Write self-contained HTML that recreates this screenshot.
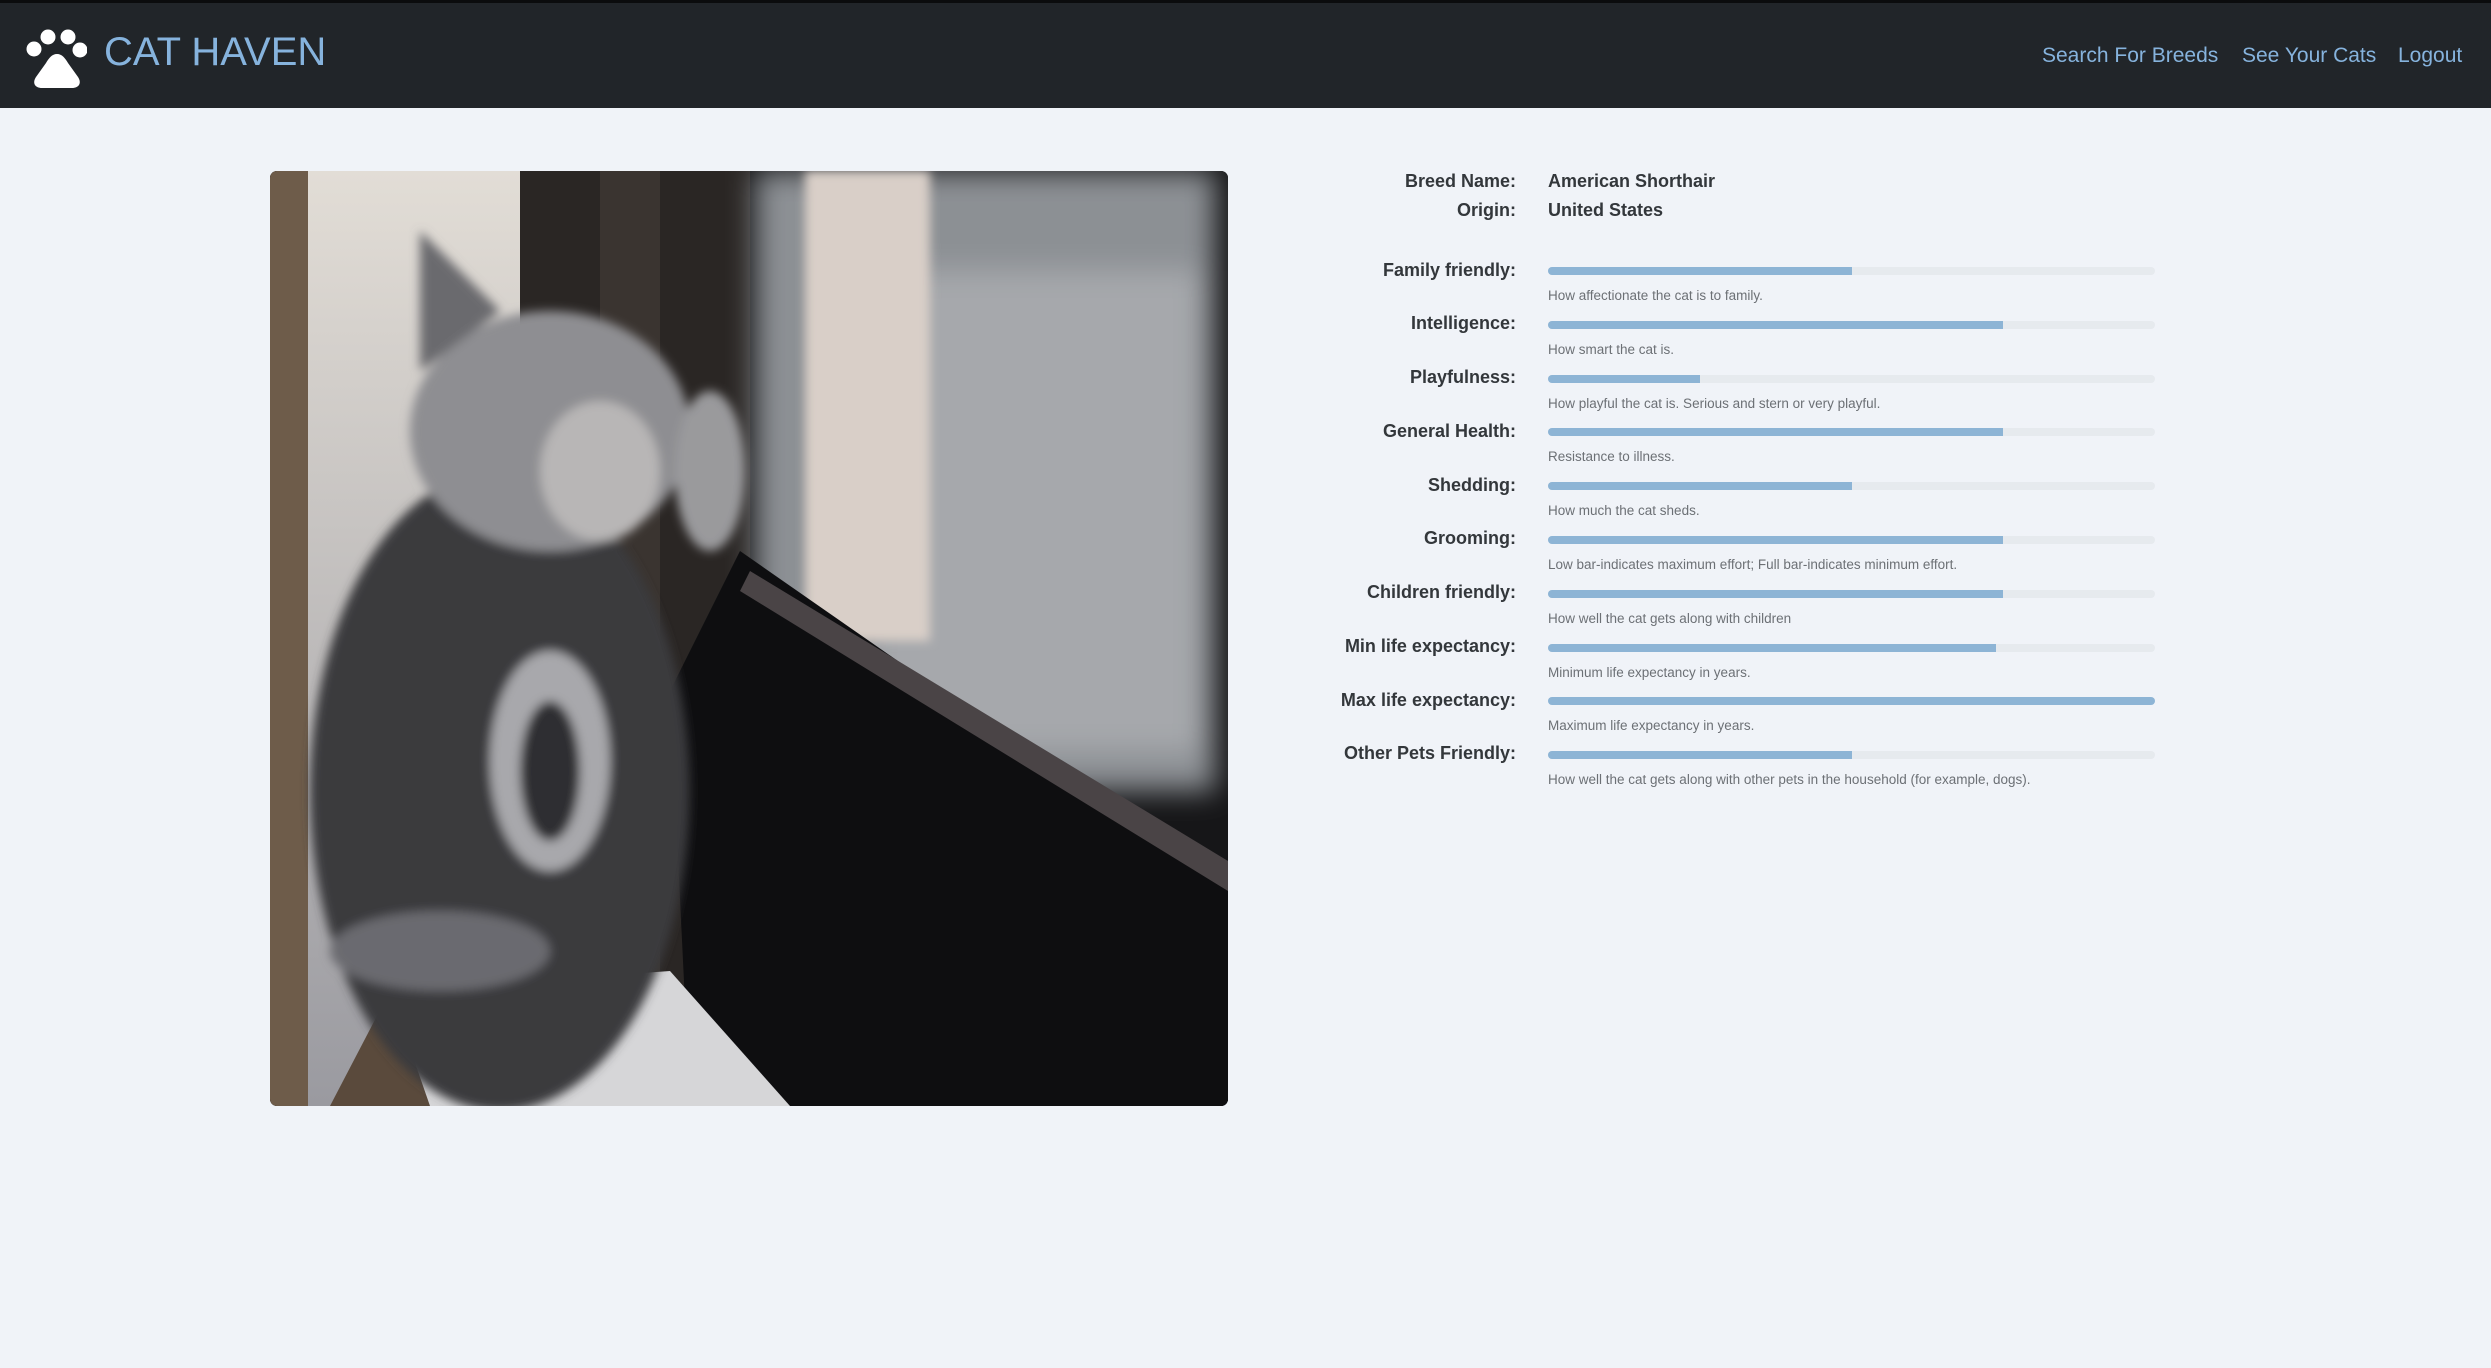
<!DOCTYPE html>
<html><head><meta charset="utf-8"><style>
*{margin:0;padding:0;box-sizing:border-box}
body{width:2491px;height:1368px;background:#f0f3f8;font-family:"Liberation Sans",sans-serif;position:relative;overflow:hidden}
.hdr{position:absolute;left:0;top:0;width:2491px;height:108px;background:#212529;border-top:3px solid #0b0c0d}
.brand{position:absolute;left:104px;top:27px;font-size:40px;color:#86b3dd;letter-spacing:0px}
.nav{position:absolute;top:41px;font-size:21px;color:#86b3dd}
.img{position:absolute;left:270px;top:171px;width:958px;height:935px;border-radius:7px;overflow:hidden;background:#1a1a1c}
.lbl{position:absolute;right:975px;font-size:18px;font-weight:bold;color:#33373b;text-align:right;white-space:nowrap}
.val{position:absolute;left:1548px;font-size:18px;font-weight:bold;color:#33373b}
.bar{position:absolute;left:1548px;width:607px;height:8px;border-radius:4px;background:#e6eaee;overflow:hidden}
.bar i{display:block;height:100%;background:#8db4d5}
.desc{position:absolute;left:1548px;font-size:13.5px;color:#6c7075}
</style></head><body>
<div class="hdr">
<svg style="position:absolute;left:25px;top:24px" width="62" height="62" viewBox="0 0 62 62">
<circle cx="9" cy="22" r="7.5" fill="#fff"/><circle cx="23" cy="10" r="7.5" fill="#fff"/><circle cx="43" cy="10" r="7.5" fill="#fff"/><circle cx="55" cy="23" r="7.5" fill="#fff"/>
<path d="M32 27 C27 27 24 31 21 36 L11 50 C7 56 10 61 17 61 L47 61 C54 61 57 56 53 50 L43 36 C40 31 37 27 32 27 Z" fill="#fff"/>
</svg>
<div class="brand">CAT HAVEN</div>
<div class="nav" style="left:2042px">Search For Breeds</div>
<div class="nav" style="left:2242px">See Your Cats</div>
<div class="nav" style="left:2398px">Logout</div>
</div>
<div class="img">
<svg width="958" height="935" viewBox="0 0 958 935">
<defs><filter id="b"><feGaussianBlur stdDeviation="14"/></filter><filter id="s"><feGaussianBlur stdDeviation="5"/></filter>
<linearGradient id="w" x1="0" y1="0" x2="0" y2="1"><stop offset="0" stop-color="#e2ddd6"/><stop offset="1" stop-color="#9a9aa0"/></linearGradient></defs>
<rect width="958" height="935" fill="#161618"/>
<rect x="0" y="0" width="40" height="935" fill="#6e5c4a"/>
<rect x="38" y="0" width="215" height="935" fill="url(#w)"/>
<rect x="250" y="0" width="230" height="935" fill="#2a2624"/>
<rect x="330" y="0" width="60" height="935" fill="#3a3430"/>
<g filter="url(#b)"><rect x="485" y="0" width="460" height="620" fill="#8c9094"/>
<rect x="600" y="100" width="330" height="480" fill="#a6a8ac"/></g>
<rect x="535" y="0" width="125" height="470" fill="#d9cfc8" filter="url(#s)"/>
<polygon points="470,380 958,720 958,935 420,935 400,520" fill="#0e0e10"/>
<polygon points="480,400 958,690 958,720 470,420" fill="#4a4446"/>
<polygon points="120,820 400,800 520,935 150,935" fill="#d6d6d8"/>
<polygon points="120,820 160,935 60,935" fill="#5a4a3c"/>
<g filter="url(#s)">
<ellipse cx="230" cy="620" rx="190" ry="320" fill="#3a3a3e"/>
<ellipse cx="280" cy="260" rx="140" ry="120" fill="#8e8e92"/>
<polygon points="150,60 230,140 150,200" fill="#6a6a6e"/>
<ellipse cx="330" cy="300" rx="60" ry="70" fill="#b8b6b6"/>
<ellipse cx="280" cy="590" rx="60" ry="110" fill="#a8a8ac"/>
<ellipse cx="280" cy="600" rx="30" ry="70" fill="#2e2e32"/>
<ellipse cx="440" cy="300" rx="35" ry="80" fill="#9a9a9c"/>
<ellipse cx="170" cy="780" rx="110" ry="40" fill="#6a6a70"/>
</g>
</svg>
</div>
<div class="lbl" style="top:171px">Breed Name:</div><div class="val" style="top:171px">American Shorthair</div>
<div class="lbl" style="top:200px">Origin:</div><div class="val" style="top:200px">United States</div>

<div class="lbl" style="top:260px">Family friendly:</div><div class="bar" style="top:267px"><i style="width:50%"></i></div><div class="desc" style="top:288px">How affectionate the cat is to family.</div>
<div class="lbl" style="top:313px">Intelligence:</div><div class="bar" style="top:321px"><i style="width:75%"></i></div><div class="desc" style="top:342px">How smart the cat is.</div>
<div class="lbl" style="top:367px">Playfulness:</div><div class="bar" style="top:375px"><i style="width:25%"></i></div><div class="desc" style="top:396px">How playful the cat is. Serious and stern or very playful.</div>
<div class="lbl" style="top:421px">General Health:</div><div class="bar" style="top:428px"><i style="width:75%"></i></div><div class="desc" style="top:449px">Resistance to illness.</div>
<div class="lbl" style="top:475px">Shedding:</div><div class="bar" style="top:482px"><i style="width:50%"></i></div><div class="desc" style="top:503px">How much the cat sheds.</div>
<div class="lbl" style="top:528px">Grooming:</div><div class="bar" style="top:536px"><i style="width:75%"></i></div><div class="desc" style="top:557px">Low bar-indicates maximum effort; Full bar-indicates minimum effort.</div>
<div class="lbl" style="top:582px">Children friendly:</div><div class="bar" style="top:590px"><i style="width:75%"></i></div><div class="desc" style="top:611px">How well the cat gets along with children</div>
<div class="lbl" style="top:636px">Min life expectancy:</div><div class="bar" style="top:644px"><i style="width:73.8%"></i></div><div class="desc" style="top:665px">Minimum life expectancy in years.</div>
<div class="lbl" style="top:690px">Max life expectancy:</div><div class="bar" style="top:697px"><i style="width:100%"></i></div><div class="desc" style="top:718px">Maximum life expectancy in years.</div>
<div class="lbl" style="top:743px">Other Pets Friendly:</div><div class="bar" style="top:751px"><i style="width:50%"></i></div><div class="desc" style="top:772px">How well the cat gets along with other pets in the household (for example, dogs).</div>
</body></html>
